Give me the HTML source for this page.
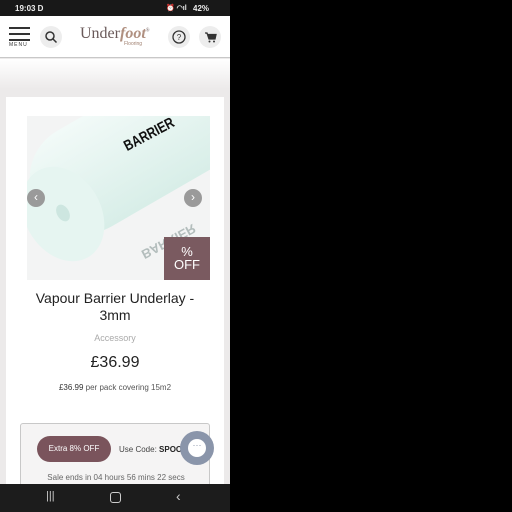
<!DOCTYPE html>
<html><head><style>
*{margin:0;padding:0;box-sizing:border-box}
body{width:512px;height:512px;background:#000;position:relative;overflow:hidden;font-family:"Liberation Sans",sans-serif}
#ph{position:absolute;left:0;top:0;width:230px;height:512px;background:#eceaea;overflow:hidden}
.sb{position:absolute;top:0;left:0;width:230px;height:16px;background:#181818;color:#eee;font-size:8px;font-weight:bold}
.hd{position:absolute;top:16px;left:0;width:230px;height:42px;background:#fff;border-bottom:1px solid #c8c8c8}
.circ{position:absolute;width:22px;height:22px;border-radius:50%;background:#ededed}
.card{position:absolute;left:6px;top:97px;width:218px;height:420px;background:#fff}
.nav{position:absolute;left:0;top:484px;width:230px;height:28px;background:#1c1c1c}
</style></head><body>
<div id="ph">
<div class="sb"><span style="position:absolute;left:15px;top:4px">19:03 D</span><span style="position:absolute;left:193px;top:4px">42%</span><span style="position:absolute;left:166px;top:4px;font-size:7px">⏰ ◠ıl</span></div>
<div class="hd">
 <div style="position:absolute;left:9px;top:11px;width:21px;height:2px;background:#333"></div>
 <div style="position:absolute;left:9px;top:17px;width:21px;height:2px;background:#333"></div>
 <div style="position:absolute;left:9px;top:23px;width:21px;height:2px;background:#333"></div>
 <div style="position:absolute;left:9px;top:26px;font-size:5px;letter-spacing:1px;color:#333">MENU</div>
 <div class="circ" style="left:40px;top:10px"><svg width="22" height="22"><circle cx="10" cy="10" r="4" fill="none" stroke="#333" stroke-width="1.5"/><path d="M13 13l3.5 3.5" stroke="#333" stroke-width="1.5"/></svg></div>
 <div style="position:absolute;left:80px;top:9px;font-family:'Liberation Serif',serif;font-size:16px;color:#6a5a5a">Under<i style="font-weight:bold;color:#b09080">foot</i><sup style="font-size:5px">®</sup></div>
 <div style="position:absolute;left:124px;top:25px;font-size:5px;color:#a08070">Flooring</div>
 <div class="circ" style="left:168px;top:10px"><svg width="22" height="22"><circle cx="11" cy="11" r="6" fill="none" stroke="#333" stroke-width="1.3"/><text x="11" y="14" font-size="8" text-anchor="middle" fill="#333" font-family="Liberation Sans">?</text></svg></div>
 <div class="circ" style="left:199px;top:10px"><svg width="22" height="22"><path d="M6 7h2l2 6h6l1-4.5h-8" fill="#333" stroke="#333" stroke-width="1.3"/><circle cx="10.5" cy="15.5" r="1" fill="#333"/><circle cx="15" cy="15.5" r="1" fill="#333"/></svg></div>
</div>
<div style="position:absolute;top:59px;left:0;width:230px;height:30px;background:linear-gradient(#fff,#eceaea)"></div>
<div class="card">
 <div style="position:absolute;left:21px;top:19px;width:183px;height:164px;background:#f3f4f4;overflow:hidden">
  <div style="position:absolute;left:10px;top:35px;width:230px;height:110px;background:linear-gradient(#f2faf8,#d8eee8);border-radius:55px 0 0 55px;transform:rotate(-30deg);transform-origin:0 50%"></div>
  <div style="position:absolute;left:-2px;top:48px;width:76px;height:100px;border-radius:50%;background:#e6f5f1;transform:rotate(-30deg)"></div>
  <div style="position:absolute;left:30px;top:88px;width:12px;height:18px;border-radius:50%;background:#cde6e0;transform:rotate(-30deg)"></div>
  <div style="position:absolute;left:88px;top:10px;font-weight:bold;font-size:15px;color:#111;transform:rotate(-28deg) scaleX(.8)">BARRIER</div>
  <div style="position:absolute;left:112px;top:118px;font-weight:bold;font-size:13px;color:#8a9a98;transform:rotate(-28deg) scaleY(-1);opacity:.6">BARRIER</div>
  <div style="position:absolute;left:137px;top:121px;width:46px;height:43px;background:#7a5a60;color:#fff;font-size:13px;text-align:center;line-height:13px;padding-top:8px">%<br>OFF</div>
 </div>
 <div style="position:absolute;left:21px;top:92px;width:18px;height:18px;border-radius:50%;background:#9a9a9a;color:#fff;font-size:12px;text-align:center;line-height:17px">‹</div>
 <div style="position:absolute;left:178px;top:92px;width:18px;height:18px;border-radius:50%;background:#9a9a9a;color:#fff;font-size:12px;text-align:center;line-height:17px">›</div>
 <div style="position:absolute;left:0;top:193px;width:218px;text-align:center;font-size:14px;line-height:17px;color:#222">Vapour Barrier Underlay -<br>3mm</div>
 <div style="position:absolute;left:0;top:236px;width:218px;text-align:center;font-size:9px;color:#aaa">Accessory</div>
 <div style="position:absolute;left:0;top:257px;width:218px;text-align:center;font-size:16px;color:#222">£36.99</div>
 <div style="position:absolute;left:0;top:286px;width:218px;text-align:center;font-size:8px;color:#333">£36.99 <span style="color:#555">per pack covering 15m2</span></div>
 <div style="position:absolute;left:14px;top:326px;width:190px;height:80px;border:1px solid #c8c8c8;border-radius:3px;background:#f5f4f4">
  <div style="position:absolute;left:16px;top:12px;width:74px;height:26px;border-radius:13px;background:#7a545c;color:#fff;font-size:8px;text-align:center;line-height:26px">Extra 8% OFF</div>
  <div style="position:absolute;left:98px;top:21px;font-size:8px;color:#444">Use Code: <b style="color:#222">SPOOK</b></div>
  <div style="position:absolute;left:0;top:49px;width:190px;text-align:center;font-size:8px;color:#666">Sale ends in 04 hours 56 mins 22 secs</div>
 </div>
</div>
<div style="position:absolute;left:180px;top:431px;width:34px;height:34px;border-radius:50%;background:#8a95aa"><div style="position:absolute;left:8px;top:8px;width:18px;height:18px;border-radius:50%;background:#fff;color:#8a95aa;font-size:9px;text-align:center;line-height:12px">···</div></div>
<div class="nav"><span style="position:absolute;left:46px;top:6px;color:#ccc;font-size:11px">|||</span><div style="position:absolute;left:110px;top:8px;width:11px;height:11px;border:1.5px solid #ccc;border-radius:3px"></div><span style="position:absolute;left:176px;top:4px;color:#ccc;font-size:14px">‹</span></div>
</div>
</body></html>
